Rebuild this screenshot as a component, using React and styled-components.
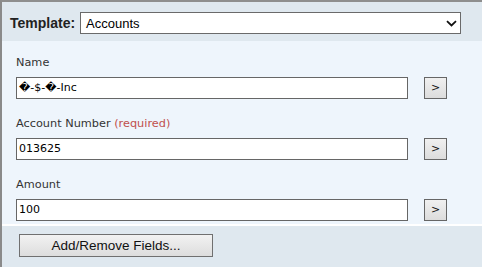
import styled, { createGlobalStyle } from 'styled-components';

const GlobalStyle = createGlobalStyle`
  html, body {
    margin: 0;
    padding: 0;
    background: #ffffff;
  }
  * {
    box-sizing: border-box;
  }
`;

const fields = [
  { label: 'Name', value: '\uFFFD-$-\uFFFD-Inc' },
  { label: 'Account Number', required: true, value: '013625' },
  { label: 'Amount', value: '100' },
];

function App() {
  return (
    <>
      <GlobalStyle />
      <Panel>
        <Header>
          <TemplateLabel>Template:</TemplateLabel>
          <SelectBox>
            <span>Accounts</span>
            <svg width='11' height='7' viewBox='0 0 11 7'>
              <path d='M1 1.2 L5.5 5.4 L10 1.2' fill='none' stroke='#111' strokeWidth='1.8' />
            </svg>
          </SelectBox>
        </Header>
        <Body>
          {fields.map((f) => (
            <Field key={f.label}>
              <Label>
                {f.label}
                {f.required && <Required> (required)</Required>}
              </Label>
              <InputRow>
                <TextBox>{f.value}</TextBox>
                <PickButton type='button'>&gt;</PickButton>
              </InputRow>
            </Field>
          ))}
        </Body>
        <Footer>
          <FooterButton type='button'>Add/Remove Fields...</FooterButton>
        </Footer>
      </Panel>
    </>
  );
}
export default App;

const Panel = styled.div`
  width: 482px;
  height: 267px;
  border-top: 2px solid #8e8e8e;
  border-left: 2px solid #8a8a8a;
  background: #dfe8ef;
  display: flex;
  flex-direction: column;
  overflow: hidden;
`;

const Header = styled.div`
  height: 39px;
  display: flex;
  align-items: flex-start;
  padding: 10px 0 0 8px;
  background: #dfe8ef;
`;

const TemplateLabel = styled.span`
  font-family: 'Liberation Sans', Arial, sans-serif;
  font-weight: bold;
  font-size: 14px;
  color: #222;
  line-height: 22px;
  margin-right: 5px;
`;

const SelectBox = styled.div`
  width: 381px;
  height: 22px;
  border: 1px solid #6a6a6a;
  background: #fff;
  display: flex;
  align-items: center;
  justify-content: space-between;
  padding: 0 3px 0 5px;
  font-family: 'Liberation Sans', Arial, sans-serif;
  font-size: 13px;
  color: #000;

  svg {
    display: block;
  }
`;

const Body = styled.div`
  background: #eef5fc;
  padding: 14px 0 0 14px;
  height: 185px;
  border-bottom: 2px solid #ffffff;
`;

const Field = styled.div`
  display: flex;
  flex-direction: column;
  margin-bottom: 17px;
`;

const Label = styled.div`
  font-family: 'DejaVu Sans', Verdana, sans-serif;
  font-size: 11.3px;
  line-height: 16px;
  height: 16px;
  color: #333;
  margin-bottom: 6px;
`;

const Required = styled.span`
  color: #c0504d;
`;

const InputRow = styled.div`
  display: flex;
  align-items: flex-start;
`;

const TextBox = styled.div`
  width: 392px;
  height: 22px;
  border: 1px solid #666;
  background: #fff;
  padding: 0 0 0 2px;
  font-family: 'DejaVu Sans', Verdana, sans-serif;
  font-size: 11px;
  line-height: 20px;
  color: #000;
  white-space: nowrap;
`;

const PickButton = styled.button`
  width: 23px;
  height: 22px;
  margin-left: 16px;
  padding: 0;
  border: 1px solid #666;
  background: linear-gradient(#f0f0f0, #dcdcdc);
  font-family: 'DejaVu Sans', Verdana, sans-serif;
  font-size: 11px;
  line-height: 20px;
  color: #111;
`;

const Footer = styled.div`
  flex: 1;
  background: #dfe8ef;
  padding: 8px 0 0 17px;
`;

const FooterButton = styled.button`
  width: 194px;
  height: 23px;
  padding: 0;
  border: 1px solid #707070;
  border-radius: 0;
  background: linear-gradient(#f2f2f2, #dddddd);
  font-family: 'Liberation Sans', Arial, sans-serif;
  font-size: 13.5px;
  color: #111;
`;
